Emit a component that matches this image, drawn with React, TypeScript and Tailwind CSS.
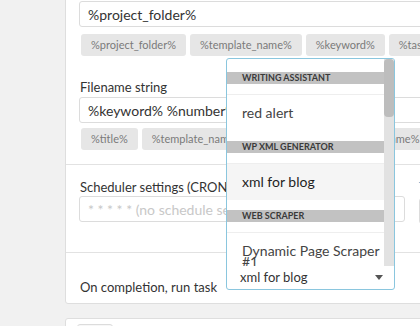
import React from "react";

const Tag = ({ children }: { children: React.ReactNode }) => (
  <div className="h-[22px] px-[10px] flex items-center rounded-[3px] bg-[#e6e6e6] text-[11px] text-[#7a7a7a] whitespace-nowrap shrink-0">
    {children}
  </div>
);

const Header = ({ children, className = "" }: { children: React.ReactNode; className?: string }) => (
  <div className={"h-[12px] bg-[#c2c2c2] pl-[15px] text-[9px] leading-[12px] font-bold text-[#3a3a3a] uppercase whitespace-nowrap " + className}>
    {children}
  </div>
);

export default function App() {
  return (
    <div className="relative w-[420px] h-[326px] overflow-hidden bg-[#f1f1f1] font-['Lato',sans-serif]">
      <div className="ml-[65px] -mt-[20px] w-[600px] bg-white border border-[#dedede] rounded-[3px]">
        {/* Section 1 */}
        <div className="pt-[20px] pl-[13px] pr-[13px] pb-[14px] border-b border-[#e2e2e2]">
          <div className="h-[26px] border border-[#dcdcdc] rounded-[3px] flex items-center px-[8px] text-[14px] text-[#333]">
            %project_folder%
          </div>
          <div className="mt-[7px] pl-[2px] flex gap-[4px]">
            <Tag>%project_folder%</Tag>
            <Tag>%template_name%</Tag>
            <Tag>%keyword%</Tag>
            <Tag>%task_name%</Tag>
          </div>
          <div className="mt-[23px] h-[16px] leading-[16px] text-[13px] text-[#333] pl-[1px]">Filename string</div>
          <div className="mt-[2px] h-[26px] border border-[#dcdcdc] rounded-[3px] flex items-center px-[8px] text-[14px] text-[#333]">
            %keyword% %number%
          </div>
          <div className="mt-[5px] pl-[2px] flex gap-[4px]">
            <Tag>%title%</Tag>
            <Tag>%template_name%</Tag>
            <Tag>%keyword%</Tag>
            <Tag>%task_name%</Tag>
          </div>
        </div>
        {/* Section 2 */}
        <div className="pt-[14px] pl-[13px] pr-[13px] pb-[28px] border-b border-[#e2e2e2] grid grid-cols-[326px_1fr] gap-x-[14px]">
          <div>
            <div className="h-[16px] leading-[16px] text-[13px] text-[#333] pl-[1px]">Scheduler settings (CRON)</div>
            <div className="mt-[1px] h-[26px] border border-[#dcdcdc] rounded-[3px] flex items-center px-[8px] text-[14px] text-[#c8c8c8]">
              * * * * * (no schedule set)
            </div>
          </div>
          <div>
            <div className="h-[16px] leading-[16px] text-[13px] text-[#4aa3cc]">Timezone</div>
            <div className="mt-[3px] h-[26px] border border-[#dcdcdc] rounded-[3px]"></div>
          </div>
        </div>
        {/* Section 3 */}
        <div className="pt-[26px] pb-[8px] pl-[13px]">
          <div className="h-[16px] leading-[16px] text-[13px] text-[#333] pl-[1px]">On completion, run task</div>
        </div>
      </div>
      <div className="ml-[65px] mt-[14px] w-[600px] h-[40px] bg-white border border-[#dedede] rounded-[3px] pt-[5px] pl-[11px]">
        <div className="w-[36px] h-[20px] border border-[#dcdcdc] rounded-[3px] bg-[#f7f7f7]"></div>
      </div>

      {/* Dropdown popup */}
      <div className="absolute left-[226px] top-[58px] w-[169px] h-[232px] bg-white border border-[#8ac6de] rounded-[3px] flex flex-col overflow-hidden">
        <div className="h-[207px] flex">
          <div className="w-[157px] overflow-hidden">
            <div className="h-[13px]"></div>
            <Header>Writing Assistant</Header>
            <div className="mt-[10px] border-t border-[#eeeeee] pt-[10px] pb-[10px] pl-[15px] text-[14px] leading-[16px] text-[#444]">
              red alert
            </div>
            <Header className="mt-[10px]">WP XML Generator</Header>
            <div className="mt-[10px] border-t border-[#eeeeee] bg-[#f5f5f5] pt-[10px] pb-[10px] pl-[15px] text-[14px] leading-[16px] text-[#1f1f1f]">
              xml for blog
            </div>
            <Header className="mt-[10px]">Web Scraper</Header>
            <div className="mt-[10px] border-t border-[#eeeeee] pt-[12px] pl-[15px] text-[14px] leading-[11px] text-[#444]">
              Dynamic Page Scraper
              <br />
              #1
            </div>
          </div>
          <div className="w-[10px] bg-[#e2e2e2]">
            <div className="h-[58px] rounded-[4px] bg-[#bdbdbd]"></div>
          </div>
        </div>
        <div className="h-[23px] flex items-center pl-[13px] pr-[11px] text-[13px] text-[#333]">
          <span className="flex-1">xml for blog</span>
          <svg width="8" height="5" viewBox="0 0 8 5">
            <path d="M0 0 L8 0 L4 5 Z" fill="#555" />
          </svg>
        </div>
      </div>
    </div>
  );
}
